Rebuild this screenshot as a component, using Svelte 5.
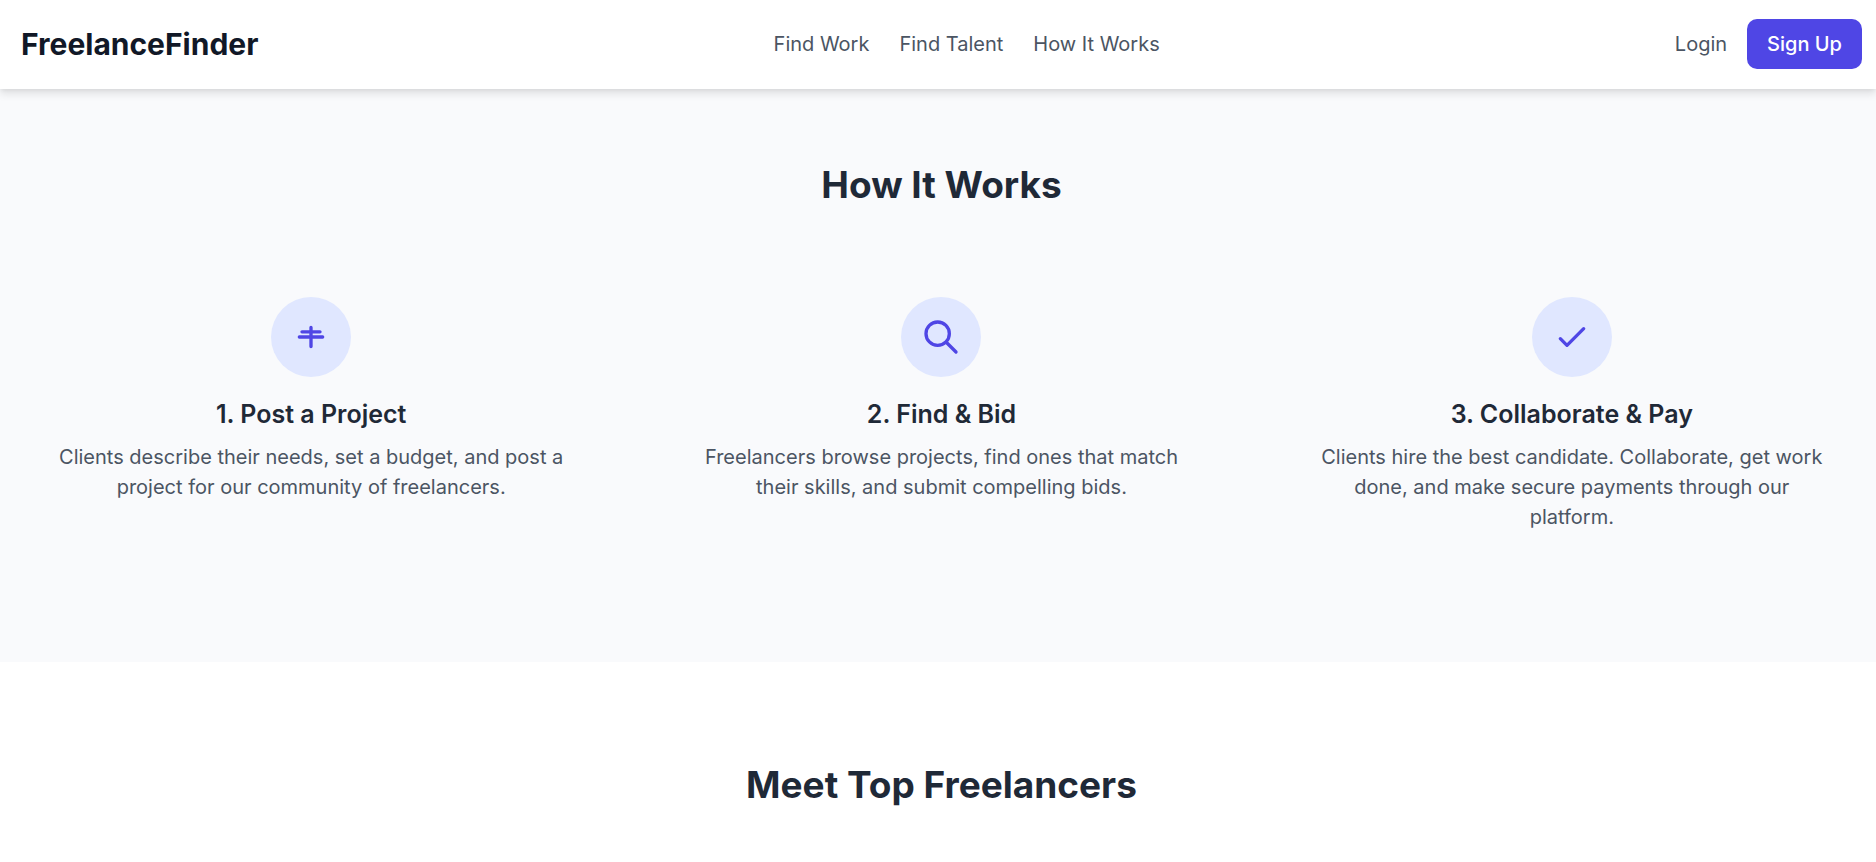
<script>
  const links = ['Find Work', 'Find Talent', 'How It Works'];
  const steps = [
    { icon: 'post', title: '1. Post a Project', text: 'Clients describe their needs, set a budget, and post a project for our community of freelancers.' },
    { icon: 'search', title: '2. Find & Bid', text: 'Freelancers browse projects, find ones that match their skills, and submit compelling bids.' },
    { icon: 'check', title: '3. Collaborate & Pay', text: 'Clients hire the best candidate. Collaborate, get work done, and make secure payments through our platform.' }
  ];
</script>

<header>
  <a class="brand" href="#home">FreelanceFinder</a>
  <nav>
    {#each links as link}<a href="#{link.toLowerCase().replaceAll(' ', '-')}">{link}</a>{/each}
  </nav>
  <div class="account">
    <a href="#login">Login</a>
    <a class="signup" href="#signup">Sign Up</a>
  </div>
</header>
<main>
  <section class="how">
    <h2>How It Works</h2>
    <div class="steps">
      {#each steps as step}
        <article>
          <div class="circle">
            <svg viewBox="0 0 24 24" width="40" height="40" aria-hidden="true">
              {#if step.icon === 'post'}
                <path d="M12 6.3v11.4M6.6 8.9h10.8M5 12h14" />
              {:else if step.icon === 'search'}
                <path d="M21 21l-6-6m2-5a7 7 0 11-14 0 7 7 0 0114 0z" />
              {:else}
                <path d="M5 13l4 4L19 7" />
              {/if}
            </svg>
          </div>
          <h3>{step.title}</h3>
          <p>{step.text}</p>
        </article>
      {/each}
    </div>
  </section>
  <section class="talent">
    <h2>Meet Top Freelancers</h2>
  </section>
</main>

<style>
  :global(body) { background: #fff; font-family: Inter, sans-serif; font-size: 20px; line-height: 30px; }
  header { position: relative; display: flex; align-items: center; justify-content: space-between; padding: 19px 14px 20px 21px; background: #fff; box-shadow: 0 5px 8px rgb(0 0 0 / 0.1), 0 2px 4px -1px rgb(0 0 0 / 0.06); }
  a { color: #4b5563; text-decoration: none; }
  .brand { color: #111827; font-size: 30px; font-weight: 700; line-height: 40px; }
  nav { display: flex; gap: 30px; }
  .account { display: flex; align-items: center; gap: 20px; }
  .signup { padding: 10px 20px; border-radius: 10px; background: #4f46e5; color: #fff; font-weight: 500; }
  h2, h3, p { margin: 0; text-align: center; }
  h2 { color: #1f2937; font-size: 37px; font-weight: 700; line-height: 46px; }
  .how { padding: 73px 14px 100px 21px; background: #f9fafc; }
  .steps { display: grid; grid-template-columns: repeat(3, 1fr); gap: 50px; margin-top: 59px; }
  article { padding: 30px; }
  .circle { display: flex; align-items: center; justify-content: center; width: 80px; height: 80px; margin: 0 auto 20px; border-radius: 50%; background: #e0e7ff; }
  svg { fill: none; stroke: #4f46e5; stroke-width: 2; stroke-linecap: round; stroke-linejoin: round; }
  h3 { margin-bottom: 10px; color: #1f2937; font-size: 25px; font-weight: 600; line-height: 35px; }
  p { color: #4b5563; }
  .talent { padding: 100px 14px 50px 21px; }
</style>
